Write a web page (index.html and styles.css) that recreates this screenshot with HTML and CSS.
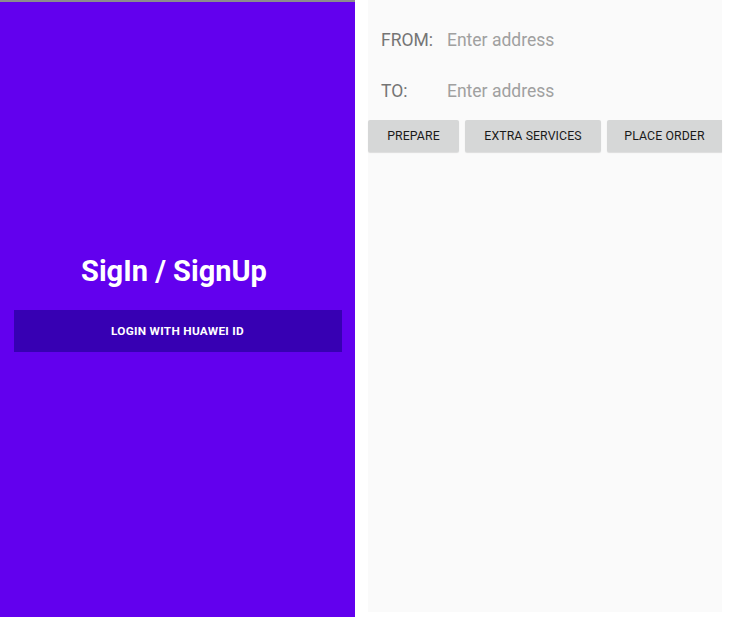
FILE: index.html
```html
<!DOCTYPE html>
<html lang="en">
<head>
  <meta charset="UTF-8"/>
  <meta name="viewport" content="width=device-width, initial-scale=1.0"/>
  <title>Taxi Order</title>
  <link rel="stylesheet" href="styles.css">
</head>
<body>
  <!-- ========== LOGIN SCREEN ========== -->
  <section class="signin">
    <h1 class="signin-title">SigIn / SignUp</h1>
    <button class="btn-huawei">LOGIN WITH HUAWEI ID</button>
  </section>

  <!-- ========== ORDER SCREEN ========== -->
  <section class="order">
    <div class="addr-row">
      <label class="addr-label" for="from">FROM:</label>
      <input class="addr-input" id="from" placeholder="Enter address">
    </div>
    <div class="addr-row">
      <label class="addr-label" for="to">TO:</label>
      <input class="addr-input" id="to" placeholder="Enter address">
    </div>
    <div class="btn-row">
      <button class="btn btn-prepare">PREPARE</button>
      <button class="btn btn-extra">EXTRA SERVICES</button>
      <button class="btn btn-place">PLACE ORDER</button>
    </div>
  </section>
</body>
</html>
```

FILE: styles.css
```css
*{margin:0;padding:0;box-sizing:border-box}
body{font-family:Roboto,'Liberation Sans',sans-serif;background:#fff;display:flex;align-items:flex-start;height:617px;overflow:hidden}

/* --- left: sign in --- */
.signin{width:355px;height:617px;background:#6200EE;border-top:2px solid #8c8c8c;display:flex;flex-direction:column;align-items:center;padding-top:250px}
.signin-title{color:#fff;font-size:29px;font-weight:700;line-height:38px;margin-right:7px}
.btn-huawei{margin-top:20px;width:328px;height:42px;background:#3700B3;color:#fff;border:none;font:700 11.8px Roboto,sans-serif;letter-spacing:.3px}

/* --- right: order --- */
.order{margin-left:13px;width:354px;height:612px;background:#fafafa;padding-top:24px}
.addr-row{display:flex;align-items:center;height:32px;padding-left:13px}
.addr-row+.addr-row{margin-top:19px}
.addr-label{width:66px;font-size:17.5px;color:#757575}
.addr-input{flex:1;border:none;background:transparent;font:17.5px Roboto,sans-serif;color:#333;outline:none}
.addr-input::placeholder{color:#a0a0a0}
.btn-row{display:flex;gap:6px;margin-top:13px}
.btn{height:32px;background:#d6d7d7;border:none;border-radius:2px;box-shadow:0 1px 1px rgba(0,0,0,.12);font:400 12.3px Roboto,sans-serif;color:#1a1a1a;letter-spacing:.1px}
.btn-prepare{width:91px}
.btn-extra{width:136px}
.btn-place{width:115px;border-radius:2px 0 0 2px}
```
